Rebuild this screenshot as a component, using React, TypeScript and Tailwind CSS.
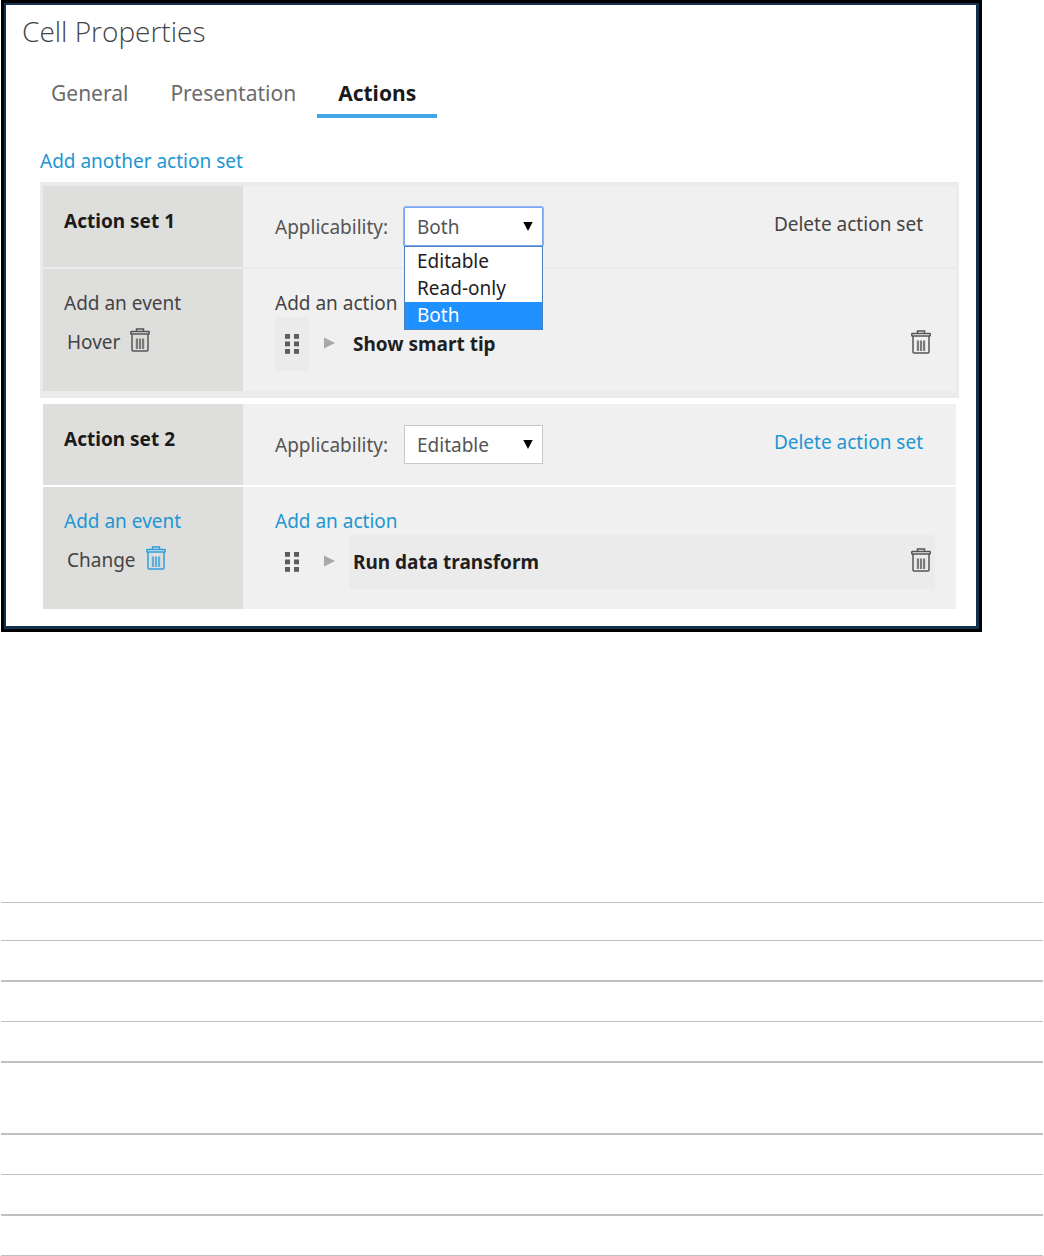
import React, { useState } from 'react';
import clsx from 'clsx';

interface ActionSet {
  id: number;
  event: string;
  action: string;
  applicability: string;
  selected: boolean;
}

const APPLICABILITY = ['Editable', 'Read-only', 'Both'];

const ACTION_SETS: ActionSet[] = [
  { id: 1, event: 'Hover', action: 'Show smart tip', applicability: 'Both', selected: true },
  { id: 2, event: 'Change', action: 'Run data transform', applicability: 'Editable', selected: false },
];

const TABS = ['General', 'Presentation', 'Actions'];

const RULES = [
  'h-[38px] border-t',
  'h-10 border-t',
  'h-[41px] border-t-2',
  'h-10 border-t',
  'h-[72px] border-t-2',
  'h-[41px] border-t-2',
  'h-10 border-t',
  'h-[41px] border-t-2',
  'h-px border-t',
];

const TrashIcon: React.FC = () => (
  <svg width="20" height="24" viewBox="0 0 20 24" fill="none" stroke="currentColor" strokeWidth="1.5">
    <path d="M6.5 3.2V1h7v2.2" />
    <rect x="0.8" y="3.4" width="18.4" height="2.6" rx="0.6" />
    <path d="M2 6v16.1q0 1 1 1h14q1 0 1-1V6" />
    <path d="M6.9 10.5v10.5M10 10.5v10.5M13.1 10.5v10.5" strokeWidth="2.2" opacity="0.75" />
  </svg>
);

const DragIcon: React.FC = () => (
  <svg width="14" height="20" viewBox="0 0 14 20" fill="#5c5c5c">
    {[0, 7.5, 15].map((y) => (
      <React.Fragment key={y}>
        <rect x="0" y={y} width="5" height="4.8" />
        <rect x="9" y={y} width="5" height="4.8" />
      </React.Fragment>
    ))}
  </svg>
);

const ApplicabilitySelect: React.FC<{ set: ActionSet }> = ({ set }) => {
  const [value, setValue] = useState(set.applicability);
  const [open, setOpen] = useState(set.selected);
  const id = `applicability-${set.id}`;

  return (
    <div className="flex items-center">
      <label htmlFor={id} className="w-[129px] text-[#555]">Applicability:</label>
      <div className="relative w-[139px]">
        <select
          id={id}
          value={value}
          onChange={(e) => setValue(e.target.value)}
          className={clsx(
            'block h-[39px] w-full appearance-none border bg-white pl-3 text-[#555] outline-none',
            open ? 'rounded-xs border-[#7aa7ee] ring-1 ring-[#8db3f0]' : 'border-[#c8c8c8]'
          )}
        >
          {APPLICABILITY.map((option) => (
            <option key={option}>{option}</option>
          ))}
        </select>
        <svg className="pointer-events-none absolute top-[15px] right-[10px]" width="10" height="9" viewBox="0 0 10 9">
          <path d="M0.3 0h9.4L5 9z" fill="#000" />
        </svg>
        {open && (
          <ul role="listbox" className="absolute top-full left-0 z-10 w-full border border-[#4a82bd] bg-white pt-px">
            {APPLICABILITY.map((option) => (
              <li
                key={option}
                role="option"
                aria-selected={option === value}
                onClick={() => {
                  setValue(option);
                  setOpen(false);
                }}
                className={clsx(
                  'h-[27px] pl-3 leading-[27px]',
                  option === value ? 'bg-[#1e90ff] text-white' : 'text-[#222]'
                )}
              >
                {option}
              </li>
            ))}
          </ul>
        )}
      </div>
    </div>
  );
};

const ActionSetPanel: React.FC<{ set: ActionSet }> = ({ set }) => {
  const link = set.selected ? 'text-[#444]' : 'text-[#2196d3]';
  const divider = set.selected ? 'border-[#ebebeb]' : 'border-white';

  return (
    <section className={clsx('px-[3px] pt-1 pb-[7px]', set.selected && 'bg-[#ebebeb]')}>
      <div className={clsx('flex border-b-2', divider)}>
        <div className="w-[200px] bg-[#dededc] py-[21px] pl-[21px]">
          <h2 className="font-bold text-[#1a1a1a]">Action set {set.id}</h2>
        </div>
        <div className="flex flex-1 items-start justify-between bg-[#f0f0f0] py-[21px] pr-[33px] pl-8">
          <ApplicabilitySelect set={set} />
          <button className={clsx('leading-[34px]', link)}>Delete action set</button>
        </div>
      </div>

      <div className="flex">
        <div className="w-[200px] bg-[#dededc] py-5 pl-[21px]">
          <button className={clsx('block', link)}>Add an event</button>
          <div className="flex h-[50px] items-center gap-[10px] pl-[3px] text-[#444]">
            <span>{set.event}</span>
            <button aria-label="Delete event" className={clsx('pb-1', set.selected ? 'text-[#555]' : 'text-[#2f9fd8]')}>
              <TrashIcon />
            </button>
          </div>
        </div>
        <div className="flex-1 bg-[#f0f0f0] py-5 pr-[21px] pl-8">
          <button className={clsx('block', link)}>Add an action</button>
          <div className="flex h-[54px] items-stretch">
            <button
              aria-label="Reorder action"
              className={clsx('flex w-[34px] items-center justify-center', set.selected && 'bg-[#ebebeb]')}
            >
              <DragIcon />
            </button>
            <button aria-label="Expand action" className="flex w-10 items-center justify-center pb-[2px]">
              <svg width="11" height="12" viewBox="0 0 11 12">
                <path d="M0 0.5L11 6L0 11.5z" fill="#a8a8a8" />
              </svg>
            </button>
            <div
              className={clsx(
                'flex flex-1 items-center justify-between pr-1 pl-1',
                !set.selected && 'bg-[#ebebeb]'
              )}
            >
              <span className="font-bold text-[#1f1f1f]">{set.action}</span>
              <button aria-label="Delete action" className="pb-1 text-[#555]">
                <TrashIcon />
              </button>
            </div>
          </div>
        </div>
      </div>
    </section>
  );
};

const App: React.FC = () => {
  const [activeTab, setActiveTab] = useState('Actions');

  return (
    <div className="bg-white pl-px font-['Noto_Sans','Open_Sans',sans-serif] text-[19px] leading-7">
      <main className="mr-[62px] border-[3px] border-black">
        <div className="border-2 border-r-[3px] border-b-[3px] border-[#14304f] pb-[10px]">
          <h1 className="pt-2 pl-4 font-['Open_Sans',sans-serif] text-[28px] leading-9 font-light text-[#444]">
            Cell Properties
          </h1>

          <nav className="mt-[30px] flex pl-6 text-[21px]">
            {TABS.map((tab) => (
              <button
                key={tab}
                onClick={() => setActiveTab(tab)}
                className={clsx(
                  'border-b-4 px-[21px] pb-[7px]',
                  tab === activeTab
                    ? 'border-[#42a5e8] font-bold text-[#1a1a1a]'
                    : 'border-transparent text-[#6b6b6b]'
                )}
              >
                {tab}
              </button>
            ))}
          </nav>

          <div className="mt-[29px] mr-[17px] ml-[34px]">
            <button className="mb-[7px] block text-[#2196d3]">Add another action set</button>
            <div className="flex flex-col gap-[2px]">
              {ACTION_SETS.map((set) => (
                <ActionSetPanel key={set.id} set={set} />
              ))}
            </div>
          </div>
        </div>
      </main>

      <div className="mt-[270px] mr-px">
        {RULES.map((rule, i) => (
          <div key={i} className={clsx('border-[#c0c0c0]', rule)} />
        ))}
      </div>
    </div>
  );
};

export default App;
